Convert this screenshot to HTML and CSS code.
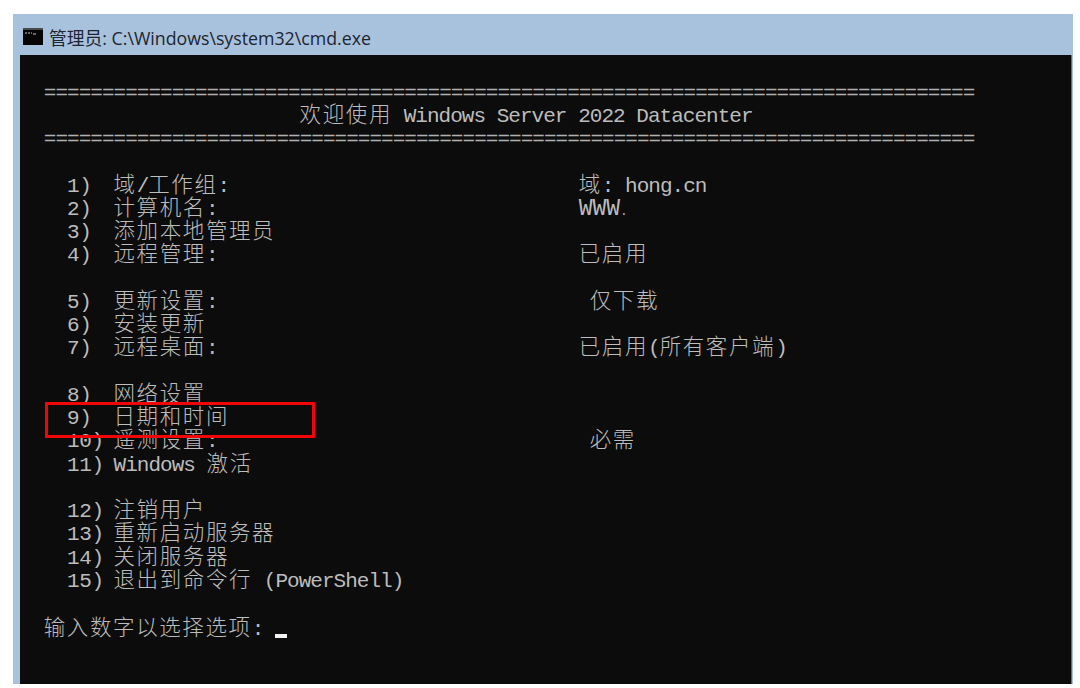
FILE: index.html
```html
<!DOCTYPE html>
<html lang="zh-CN">
<head>
<meta charset="utf-8">
<title>cmd</title>
<link rel="stylesheet" href="styles.css">
</head>
<body>
<div class="window">
  <div class="titlebar">
    <svg class="icon" width="20" height="17" viewBox="0 0 20 17"><rect width="20" height="17" fill="#4a4a4a"/><rect y="2" width="20" height="15" fill="#050505"/><path d="M2 5h2M5 5h2M8 5h1M10 6h3" stroke="#c8c8c8" stroke-width="1"/></svg>
    <span class="title"><span class="title-cjk">管理员</span>: C:\Windows\system32\cmd.exe</span>
  </div>
  <div class="console">
    <div class="rule">================================================================================</div>
    <div class="row heading"><span class="z">欢迎使用</span> Windows Server 2022 Datacenter</div>
    <div class="rule">================================================================================</div>
    <div class="group">
      <div class="row"><span class="num">1)</span><span class="label"><span class="z">域</span>/<span class="z">工作组</span>:</span><span class="value"><span class="z">域</span>: hong.cn</span></div>
      <div class="row"><span class="num">2)</span><span class="label"><span class="z">计算机名</span>:</span><span class="value www">WWW<span class="mark">.</span></span></div>
      <div class="row"><span class="num">3)</span><span class="label"><span class="z">添加本地管理员</span></span></div>
      <div class="row"><span class="num">4)</span><span class="label"><span class="z">远程管理</span>:</span><span class="value"><span class="z">已启用</span></span></div>
    </div>
    <div class="group">
      <div class="row"><span class="num">5)</span><span class="label"><span class="z">更新设置</span>:</span><span class="value inset"><span class="z">仅下载</span></span></div>
      <div class="row"><span class="num">6)</span><span class="label"><span class="z">安装更新</span></span></div>
      <div class="row"><span class="num">7)</span><span class="label"><span class="z">远程桌面</span>:</span><span class="value"><span class="z">已启用</span>(<span class="z">所有客户端</span>)</span></div>
    </div>
    <div class="group">
      <div class="row"><span class="num">8)</span><span class="label"><span class="z">网络设置</span></span></div>
      <div class="row"><span class="num">9)</span><span class="label"><span class="z">日期和时间</span></span></div>
      <div class="row"><span class="num">10)</span><span class="label"><span class="z">遥测设置</span>:</span><span class="value inset"><span class="z">必需</span></span></div>
      <div class="row"><span class="num">11)</span><span class="label">Windows <span class="z">激活</span></span></div>
    </div>
    <div class="group">
      <div class="row"><span class="num">12)</span><span class="label"><span class="z">注销用户</span></span></div>
      <div class="row"><span class="num">13)</span><span class="label"><span class="z">重新启动服务器</span></span></div>
      <div class="row"><span class="num">14)</span><span class="label"><span class="z">关闭服务器</span></span></div>
      <div class="row"><span class="num">15)</span><span class="label"><span class="z">退出到命令行</span> (PowerShell)</span></div>
    </div>
    <div class="group prompt-group">
      <div class="row prompt"><span class="z">输入数字以选择选项</span>: <span class="cursor"></span></div>
    </div>
    <div class="highlight"></div>
  </div>
</div>
</body>
</html>
```
FILE: styles.css
```css
:root {
  --cell: 11.63px;
  --line: 23.25px;
}
html, body {
  margin: 0;
  padding: 0;
  background: #fff;
}
body {
  height: 688px;
  overflow: hidden;
}
.window {
  margin: 14px 7px 0 13px;
  height: 670px;
  background: #a8c2dd;
  display: flex;
  flex-direction: column;
  box-sizing: border-box;
  padding: 0 1px 0 7px;
}
.titlebar {
  height: 41px;
  flex: none;
  display: flex;
  align-items: center;
  gap: 6px;
  padding: 6px 0 0 3px;
  box-sizing: border-box;
}
.icon {
  flex: none;
  margin-bottom: 2px;
}
.title {
  font-family: "Open Sans", "Noto Sans CJK SC", sans-serif;
  font-size: 17.75px;
  color: #1d2530;
  white-space: nowrap;
  line-height: 24px;
}
.title-cjk {
  font-family: "Noto Sans CJK SC", sans-serif;
}
.console {
  position: relative;
  flex: 1;
  min-height: 0;
  overflow: hidden;
  background: #0c0c0c;
  color: #bcbcbc;
  padding: 22.5px 0 0 23.75px;
  font-family: "Liberation Mono", "Noto Sans CJK SC", monospace;
  font-size: 21px;
  letter-spacing: -0.97px;
  border-right: 1px solid #6e6e6e;
}
.rule, .row {
  height: var(--line);
  line-height: var(--line);
  white-space: pre;
}
.rule {
  line-height: 31.25px;
  color: #b0b0b0;
}
.heading {
  padding-left: calc(var(--cell) * 22);
}
.group {
  margin-top: var(--line);
}
.prompt-group {
  margin-top: 25px;
}
.num {
  display: inline-block;
  width: calc(var(--cell) * 4);
  margin-left: calc(var(--cell) * 2);
  letter-spacing: -0.3px;
}
.label {
  display: inline-block;
  width: calc(var(--cell) * 40);
}
.value {
  display: inline-block;
}
.inset {
  padding-left: 11px;
}
.www {
  font-size: 23px;
  letter-spacing: 0;
}
.mark {
  font-size: 12px;
}
.z {
  font-family: "Noto Sans CJK SC", sans-serif;
  font-size: 21.5px;
  font-weight: 300;
  letter-spacing: 1.6px;
  color: #bdbdbd;
}
.cursor {
  display: inline-block;
  width: 12px;
  height: 4px;
  background: #f2f2f2;
  vertical-align: -3px;
}
.highlight {
  position: absolute;
  left: 25px;
  top: 347px;
  width: 264px;
  height: 30px;
  border: 3px solid #f00606;
}
```
